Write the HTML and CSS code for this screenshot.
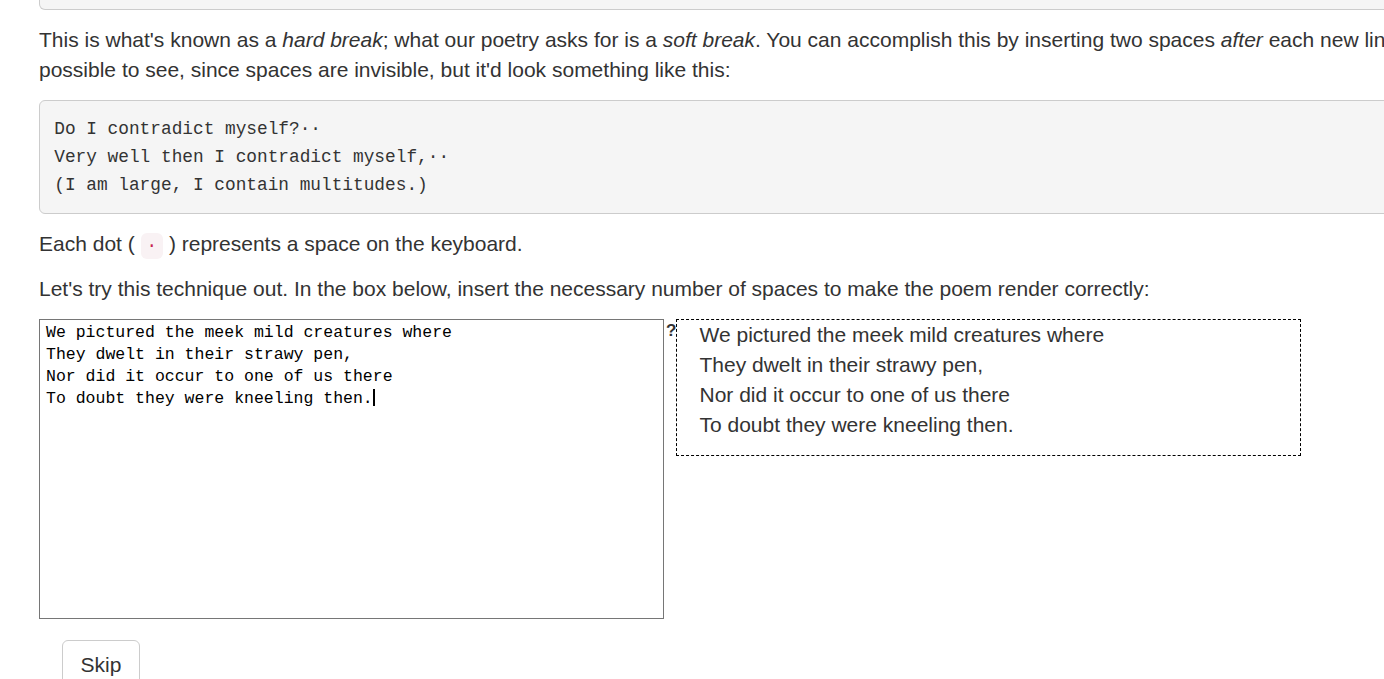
FILE: index.html
```html
<!DOCTYPE html>
<html lang="en">
<head>
<meta charset="utf-8">
<title>Paragraphs</title>
<link rel="stylesheet" href="styles.css">
</head>
<body>
<main class="lesson">
  <div class="pre-tail"></div>
  <p>This is what's known as a <em>hard break</em>; what our poetry asks for is a <em>soft break</em>. You can accomplish this by inserting two spaces <em>after</em> each new line. This is not possible to see, since spaces are invisible, but it'd look something like this:</p>
  <pre class="code-block">Do I contradict myself?··
Very well then I contradict myself,··
(I am large, I contain multitudes.)</pre>
  <p>Each dot ( <code class="inline-code">·</code> ) represents a space on the keyboard.</p>
  <p>Let's try this technique out. In the box below, insert the necessary number of spaces to make the poem render correctly:</p>
  <div class="exercise">
    <div class="editor" role="textbox" aria-multiline="true">We pictured the meek mild creatures where
They dwelt in their strawy pen,
Nor did it occur to one of us there
To doubt they were kneeling then.<span class="caret"></span></div>
    <span class="help">?</span>
    <div class="preview">
      <p>We pictured the meek mild creatures where<br>They dwelt in their strawy pen,<br>Nor did it occur to one of us there<br>To doubt they were kneeling then.</p>
    </div>
  </div>
  <div class="actions">
    <button class="btn" type="button">Skip</button>
  </div>
</main>
</body>
</html>
```
FILE: styles.css
```css
html, body {
  margin: 0;
  padding: 0;
  background: #fff;
  overflow: hidden;
}

body {
  font-family: "Liberation Sans", Arial, Helvetica, sans-serif;
  font-size: 21px;
  line-height: 1.42857;
  color: #333;
}

.lesson {
  width: 1545px;
  padding-left: 39px;
}

.pre-tail {
  height: 9px;
  background: #f5f5f5;
  border: 1px solid #ccc;
  border-top: 0;
  border-radius: 0 0 6px 6px;
  margin-bottom: 15px;
}

p {
  margin: 0 0 15px;
}

.code-block {
  margin: 0 0 15px;
  padding: 15px 14.25px 13.5px;
  background: #f5f5f5;
  border: 1px solid #ccc;
  border-radius: 6px;
  font-family: "Liberation Mono", "DejaVu Sans Mono", monospace;
  font-size: 17.8px;
  line-height: 27.86px;
  color: #333;
  white-space: pre;
}

.inline-code {
  font-family: "Liberation Mono", monospace;
  font-size: 17.5px;
  padding: 3px 6px;
  color: #c7254e;
  background: #f9f2f4;
  border-radius: 6px;
}

.exercise {
  display: flex;
  align-items: flex-start;
}

.editor {
  box-sizing: border-box;
  width: 625px;
  height: 300px;
  flex: none;
  padding: 2px 6px;
  border: 1px solid #767676;
  font-family: "Liberation Mono", "DejaVu Sans Mono", monospace;
  font-size: 16.5px;
  line-height: 22px;
  color: #000;
  white-space: pre-wrap;
  background: #fff;
}

.caret {
  display: inline-block;
  width: 2px;
  height: 17px;
  background: #000;
  vertical-align: -3px;
}

.help {
  flex: none;
  width: 11px;
  margin-left: 2px;
  margin-right: -1px;
  margin-top: 2px;
  font-weight: bold;
  font-size: 17px;
  line-height: 20px;
  color: #333;
}

.preview {
  box-sizing: border-box;
  width: 625px;
  flex: none;
  border: 1px dashed #000;
  padding: 0 22.5px;
}

.preview p {
  margin: 0 0 15px;
}

.actions {
  padding: 21px 22.5px 0;
}

.btn {
  font-family: inherit;
  font-size: 21px;
  line-height: 30px;
  color: #333;
  background: #fff;
  border: 1px solid #ccc;
  border-radius: 6px;
  padding: 9px 18px;
  margin: 0;
}
```
